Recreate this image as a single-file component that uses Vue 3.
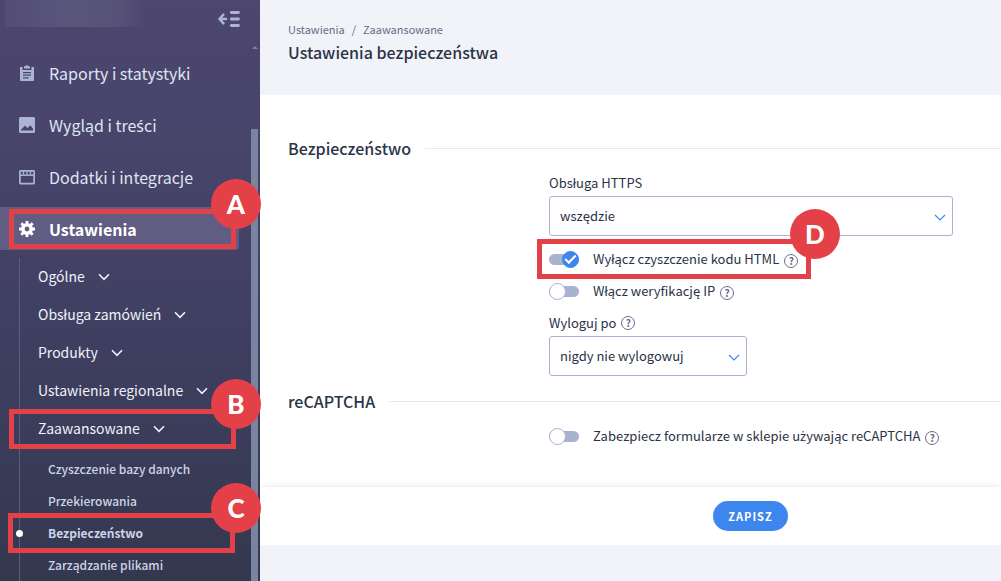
<script setup>
import { h, ref } from 'vue'

const mainItems = [
  { label: 'Raporty i statystyki', icon: 'clipboard' },
  { label: 'Wygląd i treści', icon: 'image' },
  { label: 'Dodatki i integracje', icon: 'window' },
  { label: 'Ustawienia', icon: 'gear', active: true, mark: 'A' }
]

const groups = [
  { label: 'Ogólne' },
  { label: 'Obsługa zamówień' },
  { label: 'Produkty' },
  { label: 'Ustawienia regionalne' },
  { label: 'Zaawansowane', open: true, mark: 'B' }
]

const pages = [
  { label: 'Czyszczenie bazy danych' },
  { label: 'Przekierowania' },
  { label: 'Bezpieczeństwo', active: true, mark: 'C' },
  { label: 'Zarządzanie plikami' }
]

const https = ref('wszędzie')
const logout = ref('nigdy nie wylogowuj')
const disableCleaning = ref(true)
const verifyIp = ref(false)
const recaptcha = ref(false)

const Polish = ({ text }) =>
  h('span', text.split(/([śćż])/).map((part) => (/^[śćż]$/.test(part) ? h('span', { class: 'accented' }, part) : part)))
Polish.props = ['text']
</script>

<template>
  <div class="app">
    <aside class="sidebar">
      <div class="side-head">
        <div class="shop"></div>
        <button class="collapse" type="button" aria-label="Zwiń menu">
          <svg width="22" height="16" viewBox="0 0 22 16" fill="none" stroke="currentColor" stroke-linecap="round">
            <path d="M1.6 8H8M5.4 3.6L1.4 8l4 4.4" stroke-width="2.4" stroke-linejoin="round" />
            <path d="M13.3 1.5h7.2M13.3 8h7.2M13.3 14.5h7.2" stroke-width="2.8" />
          </svg>
        </button>
      </div>

      <nav class="menu">
        <ul class="main-list">
          <li v-for="item in mainItems" :key="item.label" :class="{ active: item.active }">
            <a href="#">
              <svg v-if="item.icon === 'clipboard'" width="18" height="18" viewBox="0 0 18 18">
                <path fill="currentColor" fill-rule="evenodd" d="M2 3h2.5v3h9V3H16v13a1 1 0 0 1-1 1H3a1 1 0 0 1-1-1zM6 2.2h1.6a1.5 1.5 0 0 1 2.8 0H12v2.4H6zM5 8v1.2h8V8zm0 2.6v1.2h8v-1.2zm0 2.6v1.2h5.6v-1.2z" />
              </svg>
              <svg v-else-if="item.icon === 'image'" width="18" height="18" viewBox="0 0 18 18">
                <path fill="currentColor" fill-rule="evenodd" d="M2.500 1h13A1.500 1.500 0 0 1 17 2.500v13a1.500 1.500 0 0 1-1.500 1.500h-13A1.500 1.500 0 0 1 1 15.500v-13A1.500 1.500 0 0 1 2.500 1zM3 14.500h12V12.500L12.300 9.200 9.600 12 7 9.800 3 13.500z" />
              </svg>
              <svg v-else-if="item.icon === 'window'" width="18" height="18" viewBox="0 0 18 18" fill="none" stroke="currentColor">
                <rect x="1.900" y="2.900" width="14.200" height="12.800" rx="0.600" stroke-width="1.700" />
                <path d="M2 7.200h14" stroke-width="1.500" />
                <path d="M5.500 2.500v4M9 2.500v4M12.500 2.500v4" stroke-width="1.300" />
              </svg>
              <svg v-else width="18" height="18" viewBox="0 0 18 18">
                <circle cx="9" cy="9" r="4.200" fill="none" stroke="currentColor" stroke-width="3.600" />
                <path stroke="currentColor" stroke-width="2.800" d="M9 1v3M9 14v3M1 9h3M14 9h3M3.300 3.300l2.200 2.200M12.500 12.500l2.200 2.200M14.700 3.300l-2.200 2.200M5.500 12.500l-2.200 2.200" />
              </svg>
              <Polish :text="item.label" />
            </a>
            <div v-if="item.mark" class="mark"><b>{{ item.mark }}</b></div>
          </li>
        </ul>

        <div class="tree">
          <ul class="group-list">
            <li v-for="group in groups" :key="group.label" :class="{ open: group.open }">
              <a href="#">
                <span>{{ group.label }}</span>
                <svg width="12" height="8" viewBox="0 0 12 8" fill="none" stroke="currentColor" stroke-width="1.600">
                  <path d="M1 1.300L6 6.300l5-5" />
                </svg>
              </a>
              <div v-if="group.mark" class="mark"><b>{{ group.mark }}</b></div>
            </li>
          </ul>
          <ul class="page-list">
            <li v-for="page in pages" :key="page.label" :class="{ active: page.active }">
              <a href="#">{{ page.label }}</a>
              <div v-if="page.mark" class="mark"><b>{{ page.mark }}</b></div>
            </li>
          </ul>
        </div>
      </nav>
      <div class="scrollbar"><i class="arrow"></i><i class="thumb"></i></div>
    </aside>

    <main class="content">
      <header class="page-head">
        <nav class="crumbs">
          <a href="#">Ustawienia</a><span>/</span><a href="#">Zaawansowane</a>
        </nav>
        <h1>Ustawienia bezpieczeństwa</h1>
      </header>

      <form class="form" @submit.prevent>
        <section>
          <h2>Bezpieczeństwo</h2>
          <div class="fields">
            <div class="label-row"><label for="https">Obsługa HTTPS</label></div>
            <div class="select">
              <select id="https" v-model="https"><option>wszędzie</option></select>
              <svg width="12" height="8" viewBox="0 0 12 8" fill="none" stroke="currentColor" stroke-width="1.200"><path d="M1 1l5 5 5-5" /></svg>
            </div>
            <div class="toggles">
              <div class="toggle-row">
                <input id="cleaning" v-model="disableCleaning" type="checkbox" />
                <label for="cleaning">Wyłącz czyszczenie kodu HTML</label>
                <button class="help" type="button" aria-label="Pomoc">?</button>
                <div class="mark"><b>D</b></div>
              </div>
              <div class="toggle-row">
                <input id="verify" v-model="verifyIp" type="checkbox" />
                <label for="verify">Włącz weryfikację IP</label>
                <button class="help" type="button" aria-label="Pomoc">?</button>
              </div>
            </div>
            <div class="label-row">
              <label for="logout">Wyloguj po</label>
              <button class="help" type="button" aria-label="Pomoc">?</button>
            </div>
            <div class="select half">
              <select id="logout" v-model="logout"><option>nigdy nie wylogowuj</option></select>
              <svg width="12" height="8" viewBox="0 0 12 8" fill="none" stroke="currentColor" stroke-width="1.200"><path d="M1 1l5 5 5-5" /></svg>
            </div>
          </div>
        </section>

        <section>
          <h2>reCAPTCHA</h2>
          <div class="fields">
            <div class="toggle-row">
              <input id="recaptcha" v-model="recaptcha" type="checkbox" />
              <label for="recaptcha"><Polish text="Zabezpiecz formularze w sklepie używając reCAPTCHA" /></label>
              <button class="help" type="button" aria-label="Pomoc">?</button>
            </div>
          </div>
        </section>

        <footer class="actions">
          <button class="save" type="submit">ZAPISZ</button>
        </footer>
      </form>
    </main>
  </div>
</template>

<style>
body {
  margin: 0;
  background: #f2f3f8;
}
</style>

<style scoped>
* {
  box-sizing: border-box;
}

.app {
  display: flex;
  min-height: 100vh;
  font-family: "Noto Sans CJK JP", "Noto Sans", sans-serif;
  font-size: 13px;
  line-height: 20px;
  color: #2a3347;
}

.app :deep(.accented) {
  font-family: "Noto Sans", sans-serif;
  line-height: 1;
}

ul {
  margin: 0;
  padding: 0;
  list-style: none;
}

a {
  color: inherit;
  text-decoration: none;
}

button,
select,
input {
  margin: 0;
  font: inherit;
  color: inherit;
}

/* Sidebar */
.sidebar {
  position: relative;
  flex: none;
  width: 260px;
  background: linear-gradient(#4d466f 0, #48446a 25%, #3e3f60 60%, #34384e 100%);
  color: #dfe4f3;
}

.side-head {
  display: flex;
  justify-content: space-between;
  height: 51px;
  padding: 0 20px 0 5px;
}

.shop {
  width: 142px;
  height: 27px;
  background: linear-gradient(90deg, #544e77, #59557b 45%, #575278 80%, transparent);
}

.collapse {
  display: flex;
  margin-top: 11px;
  height: 16px;
  padding: 0;
  border: 0;
  background: none;
  color: #abb5d3;
}

.main-list {
  display: grid;
  gap: 9px;
}

.main-list li {
  position: relative;
  margin-right: 21px;
}

.main-list a {
  display: flex;
  align-items: center;
  gap: 13px;
  height: 43px;
  padding-left: 18px;
  font-size: 16px;
  line-height: 24px;
}

.main-list svg {
  color: #abb5d3;
}

.main-list .active {
  border-radius: 0 4px 4px 0;
  background: #615c82;
  color: #fff;
  font-weight: 700;
}

.main-list .active svg {
  color: #fff;
}

.tree {
  margin: 8px 0 0 19px;
  border-left: 1px solid #5c5d7b;
}

.group-list li,
.page-list li {
  position: relative;
}

.group-list a {
  display: flex;
  align-items: center;
  gap: 13px;
  height: 38px;
  padding: 0 0 2px 18px;
  font-size: 14px;
  color: #f0f2fa;
}

.group-list svg {
  margin-top: 2px;
}

.page-list {
  padding-top: 5px;
}

.page-list a {
  display: flex;
  align-items: center;
  height: 32px;
  padding-left: 28px;
  font-size: 12px;
  font-weight: 500;
  color: #ccd4e8;
}

.page-list .active a {
  font-weight: 700;
}

.page-list .active::before {
  content: "";
  position: absolute;
  left: -4px;
  top: 13px;
  width: 7px;
  height: 7px;
  border-radius: 50%;
  background: #fff;
}

.scrollbar {
  position: absolute;
  top: 46px;
  right: 2px;
  bottom: 0;
  display: flex;
  flex-direction: column;
  align-items: center;
  width: 7px;
}

.arrow {
  border: 3px solid transparent;
  border-top: 0;
  border-bottom-color: #7a839f;
}

.thumb {
  flex: 1;
  width: 7px;
  margin-top: 80px;
  background: #7a839f;
}

/* Lettered highlights */
.mark {
  position: absolute;
  z-index: 2;
  border: 5px solid #e44048;
  pointer-events: none;
}

.mark b {
  position: absolute;
  top: -35px;
  right: -30px;
  width: 50px;
  height: 50px;
  border-radius: 50%;
  background: #e44048;
  color: #fff;
  font: 900 26px/50px Lato, sans-serif;
  text-align: center;
}

.main-list .mark {
  inset: 2px 3px 1px 9px;
}

.group-list .mark {
  inset: -1px 24px -1px -11px;
}

.page-list .mark {
  inset: -4px 25px -4px -12px;
}

.page-list .mark b {
  right: -31px;
}

.toggle-row .mark {
  inset: -4px auto -4px -12px;
  width: 274px;
}

.toggle-row .mark b {
  right: -34px;
}

/* Content */
.content {
  flex: 1;
  min-width: 0;
}

.page-head {
  padding: 19px 28px 30px;
}

.crumbs {
  display: flex;
  gap: 7px;
  margin-bottom: 1px;
  font-size: 11px;
  color: #676c8b;
}

h1,
h2 {
  margin: 0;
  font-size: 16px;
  line-height: 25px;
  font-weight: 500;
}

.form {
  padding-top: 41px;
  background: #fff;
}

h2 {
  display: flex;
  align-items: center;
  gap: 14px;
  padding-left: 28px;
}

h2::after {
  content: "";
  flex: 1;
  height: 1px;
  background: #e8e9ed;
}

section + section {
  padding: 13px 0 35px;
}

section + section .fields {
  padding-top: 6px;
}

.fields {
  padding: 12px 48px 0 289px;
}

.label-row {
  display: flex;
  align-items: center;
  gap: 5px;
  margin-bottom: 3px;
}

.select {
  position: relative;
}

.half {
  width: 49%;
}

select {
  display: block;
  width: 100%;
  height: 40px;
  padding: 0 32px 0 10px;
  border: 1px solid #a9b3d0;
  border-radius: 3px;
  background: #fff;
  appearance: none;
}

.select svg {
  position: absolute;
  top: 18px;
  right: 7px;
  color: #3d86ee;
  pointer-events: none;
}

.toggles {
  padding: 7px 0 6px;
}

.toggle-row {
  position: relative;
  display: flex;
  align-items: center;
  height: 32px;
}

.toggle-row input {
  position: relative;
  width: 30px;
  height: 11px;
  margin-right: 14px;
  appearance: none;
  background: #a9b3d0;
  border-radius: 6px;
}

.toggle-row input::before {
  content: "";
  position: absolute;
  left: 0;
  top: -3px;
  box-sizing: border-box;
  width: 17px;
  height: 17px;
  border: 1px solid #a9b3d0;
  border-radius: 50%;
  background: #fff;
}

.toggle-row input:checked::before {
  left: 13px;
  border-color: #3d86ee;
  background: #3d86ee;
}

.toggle-row input:checked::after {
  content: "";
  position: absolute;
  left: 16px;
  top: 1px;
  width: 11px;
  height: 6px;
  box-sizing: border-box;
  border: solid #fff;
  border-width: 0 0 2px 2px;
  transform: rotate(-45deg);
}

.help {
  width: 14px;
  height: 14px;
  padding: 0;
  border: 1px solid #676c8b;
  border-radius: 50%;
  background: none;
  color: #676c8b;
  font-size: 10px;
  line-height: 12px;
  font-weight: 700;
  text-align: center;
}

.toggle-row .help {
  margin: 3px 0 0 5px;
}

.actions {
  display: flex;
  justify-content: center;
  padding: 14px 0 14px 240px;
  box-shadow: 0 -3px 5px -2px rgba(40, 50, 80, 0.1);
}

.save {
  height: 30px;
  padding: 0 15px;
  border: 0;
  border-radius: 15px;
  background: #3d86ee;
  color: #fff;
  font-size: 11px;
  font-weight: 700;
  letter-spacing: 1px;
}
</style>
